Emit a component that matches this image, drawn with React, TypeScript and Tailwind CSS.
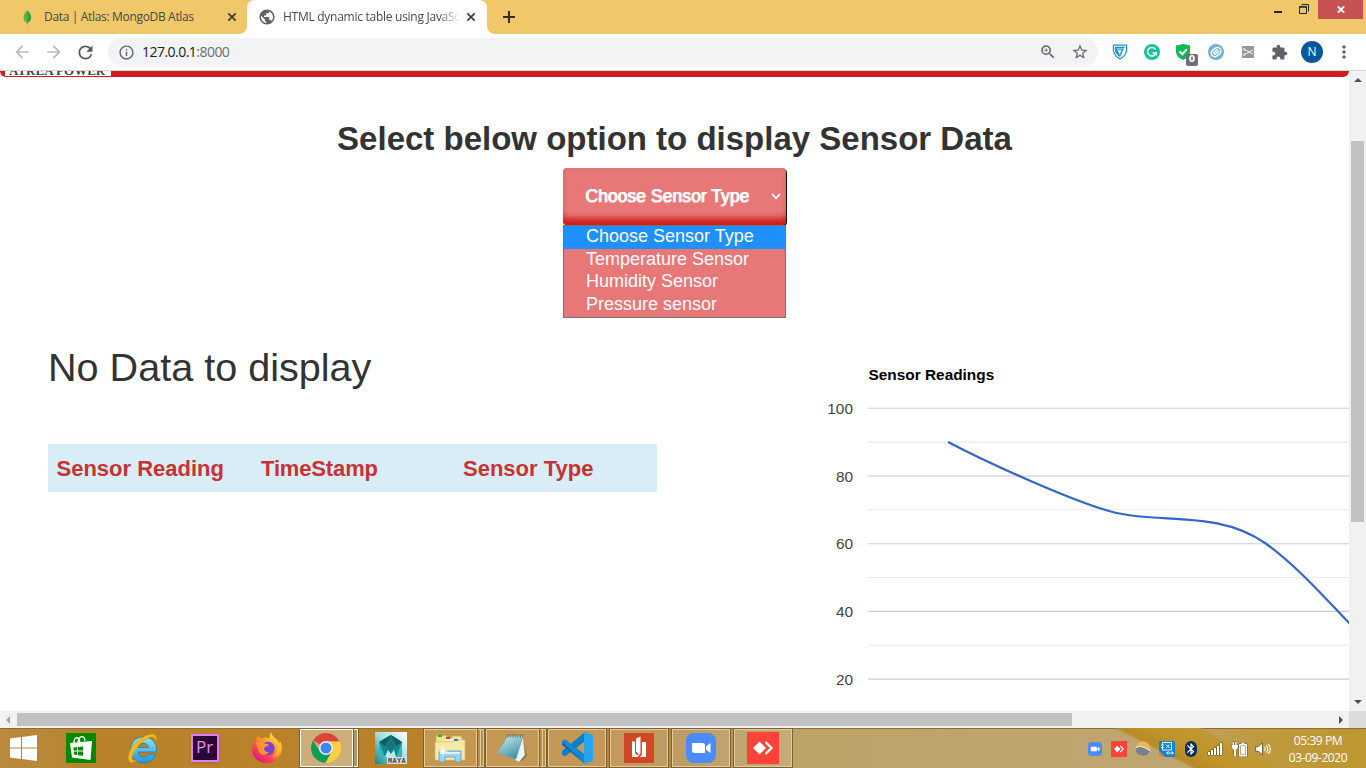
import React from "react";
import {
  MdZoomIn,
  MdStarOutline,
  MdExtension,
  MdPublic,
  MdInfoOutline,
  MdArrowBack,
  MdArrowForward,
  MdRefresh,
  MdMoreVert,
  MdBluetooth,
} from "react-icons/md";

const ui = "font-['Open_Sans','Noto_Sans',sans-serif]";
const arial = "font-['Liberation_Sans',Arial,sans-serif]";

const CloseX = () => (
  <svg className="shrink-0" width="14" height="14" viewBox="0 0 14 14">
    <path d="m3.300 3.300 7.400 7.400M10.700 3.300 3.300 10.700" stroke="#3c3c3c" strokeWidth="1.700" />
  </svg>
);

function TabStrip() {
  return (
    <div className={`flex h-[34px] shrink-0 bg-white ${ui} text-[12px] text-[#45494d]`}>
      <div className="flex w-[247px] items-center rounded-br-lg bg-[#f0c869] pl-[20px]">
        <svg width="14" height="16" viewBox="0 0 14 16">
          <path d="M7.3 1C10 4 11.2 6.2 11.2 8.6c0 2.6-1.6 4.6-3.9 5.6Z" fill="#3f9c35" />
          <path d="M7.3 1C4.8 4 3.5 6.2 3.5 8.6c0 2.6 1.6 4.6 3.8 5.6Z" fill="#5bb14c" />
          <path d="M7.3 3v12.5" stroke="#6c8f4a" strokeWidth=".8" />
        </svg>
        <span className="ml-[10px] w-[181px] whitespace-nowrap tracking-[-0.33px]">Data | Atlas: MongoDB Atlas</span>
        <CloseX />
      </div>
      <div className="w-[240px] bg-linear-to-b from-[#f0c869] from-50% to-white to-50%">
        <div className="flex h-full items-center rounded-t-lg bg-white pl-[11px]">
          <MdPublic size={18} className="text-[#5f6368]" />
          <span className="ml-[7px] w-[177px] overflow-hidden whitespace-nowrap mask-r-from-88% tracking-[-0.270px]">
            HTML dynamic table using JavaScript
          </span>
          <div className="ml-[4px]">
            <CloseX />
          </div>
        </div>
      </div>
      <div className="flex flex-1 items-start rounded-bl-lg bg-[#f0c869] pl-[15px]">
        <svg className="mt-[10px]" width="14" height="14" viewBox="0 0 14 14">
          <path d="M7 1v12M1 7h12" stroke="#2f2f2f" strokeWidth="2" />
        </svg>
        <div className="ml-auto flex items-start">
          <div className="mt-[11px] h-[2px] w-[8px] bg-[#222]" />
          <svg className="mt-[4px] ml-[17px]" width="10" height="10" viewBox="0 0 10 10" fill="none" stroke="#222">
            <path d="M2.5 .5h7v7" />
            <path d="M.5 2.5h7v7h-7z" />
            <path d="M.5 3.2h7" />
          </svg>
          <div className="mr-[3px] ml-[9px] flex h-[19px] w-[45px] items-center justify-center bg-[#c75050]">
            <svg width="8" height="7" viewBox="0 0 8 7">
              <path d="M.8 .3 7.2 6.7M7.2 .3 .8 6.7" stroke="#fff" strokeWidth="1.8" />
            </svg>
          </div>
        </div>
      </div>
    </div>
  );
}

function Toolbar() {
  return (
    <div className={`flex h-[37px] shrink-0 items-center border-b border-[#d4d6d9] bg-white ${ui}`}>
      <MdArrowBack size={20} className="ml-[12px] text-[#b9bbbe]" />
      <MdArrowForward size={20} className="ml-[12px] text-[#b9bbbe]" />
      <MdRefresh size={21} className="ml-[11px] text-[#55595e]" />
      <div className="ml-[12px] flex h-[28px] w-[990px] items-center rounded-full bg-[#f1f3f4]">
        <MdInfoOutline size={17} className="ml-[10px] text-[#5f6368]" />
        <span className="ml-[7px] pb-[2px] text-[14px] tracking-[-0.530px] text-[#202124]">
          127.0.0.1<span className="text-[#6b6f74]">:8000</span>
        </span>
        <MdZoomIn size={18} className="ml-auto text-[#5f6368]" />
        <MdStarOutline size={18} className="mr-[9px] ml-[14px] text-[#5f6368]" />
      </div>
      <svg className="ml-[14px]" width="16" height="16" viewBox="0 0 16 16">
        <path d="M.8 .6h14.400v4.600c0 5-3.500 8.400-7.200 10.400C4.300 13.600.8 10.200.8 5.200Z" fill="#1791d6" />
        <path d="M2 1.800h12v3.600c0 4-2.700 6.900-6 8.800-3.300-1.900-6-4.800-6-8.800Z" fill="#fff" />
        <path d="M2.900 2.700h10.200l-1.300 1.900H4.700L8 11.200l1.500-3 .9.600L8 13C5 11 2.900 8.600 2.900 5.400Z" fill="#1791d6" />
        <path d="M5.500 5.300H12L8.500 10.300 8 9.300l1.700-3H6z" fill="#1791d6" />
      </svg>
      <svg className="ml-[16px]" width="16" height="16" viewBox="0 0 16 16">
        <circle cx="8" cy="8" r="8" fill="#15c39a" />
        <path d="M11.600 5.500A4.300 4.300 0 1 0 12 9H8.500" stroke="#fff" strokeWidth="1.500" fill="none" />
        <path d="M12.300 8v3.500" stroke="#fff" strokeWidth="1.200" />
      </svg>
      <div className="relative ml-[16px] h-[16px] w-[16px]">
        <svg width="14" height="16" viewBox="0 0 14 16">
          <path d="M7 0 14 1.500v6c0 4-3 7-7 8.500-4-1.500-7-4.500-7-8.500v-6Z" fill="#0fb855" />
          <path d="m3.500 7.500 2.700 2.700 4.700-5" stroke="#fff" strokeWidth="2" fill="none" />
        </svg>
        <div className="absolute top-[10px] left-[10px] flex h-[12px] w-[12px] items-center justify-center rounded-[2px] bg-[#6d7079] font-['DejaVu_Sans',sans-serif] text-[9px] font-bold text-white">
          0
        </div>
      </div>
      <svg className="ml-[16px]" width="16" height="16" viewBox="0 0 16 16">
        <circle cx="8" cy="8" r="8" fill="#6db3d2" />
        <g transform="rotate(-38 8 8)" fill="none" stroke="#fff" strokeWidth="1.500">
          <rect x="2.800" y="4.600" width="10.400" height="7" rx="3.500" />
          <path d="M11 7.100H6.500a1 1 0 0 0 0 2.100H11" />
        </g>
      </svg>
      <svg className="ml-[18px]" width="12" height="12" viewBox="0 0 12 12">
        <path d="M0 0h12v12H0z" fill="#979797" />
        <path d="m2.500 3.500 8.500 4.500M2.500 8.500 11 3.800" stroke="#f3f3f3" strokeWidth="1" />
        <circle cx="2.200" cy="3.400" r="1" fill="none" stroke="#f3f3f3" strokeWidth=".8" />
        <circle cx="2.200" cy="8.600" r="1" fill="none" stroke="#f3f3f3" strokeWidth=".8" />
      </svg>
      <MdExtension size={17} className="ml-[17px] text-[#5f6368]" />
      <div className="ml-[13px] flex h-[22px] w-[22px] items-center justify-center rounded-full bg-[#01579b] text-[12px] text-white">
        N
      </div>
      <MdMoreVert size={20} className="ml-[11px] text-[#5f6368]" />
    </div>
  );
}

const options = ["Choose Sensor Type", "Temperature Sensor", "Humidity Sensor", "Pressure sensor"];

function SensorSelect() {
  return (
    <div className="relative h-[57px] w-[223px]">
      <div className="flex h-[57px] items-center rounded-[4px] bg-[#e87878] pl-[22px] text-[17.600px] text-white shadow-[inset_0_-11px_6px_-4px_#cf1d1d,inset_0_0_5px_#dd6a6a,1px_1px_0_#111]">
        <span className="w-[186px] whitespace-nowrap [text-shadow:1px_0_0_#fff,0_1px_0_#fff8]">Choose Sensor Type</span>
        <svg width="10" height="7" viewBox="0 0 10 7">
          <path d="m1 1.200 4 4 4-4" stroke="#fff" strokeWidth="1.800" fill="none" />
        </svg>
      </div>
      <ul className="absolute top-[57px] left-0 z-10 h-[93px] w-[223px] border border-[#7a7070] bg-[#e87878] text-[18px] leading-[21px] text-white">
        {options.map((o, i) => (
          <li key={o} className={i === 0 ? "h-[23px] bg-[#1e90ff] pl-[22px]" : "h-[22.400px] pl-[22px]"}>
            {o}
          </li>
        ))}
      </ul>
    </div>
  );
}

const ticks = [100, 80, 60, 40, 20];

function Chart() {
  return (
    <svg className={`shrink-0 ${arial}`} width="529" height="361" viewBox="820 350 529 361">
      <text x="868.500" y="380" fontSize="15.400" fontWeight="bold" fill="#000">
        Sensor Readings
      </text>
      {ticks.map((t, i) => (
        <g key={t}>
          <path d={`M868 ${408.300 + i * 67.700}H1349`} stroke="#ccc" strokeWidth="1.100" />
          <path d={`M868 ${442.100 + i * 67.700}H1349`} stroke="#ebebeb" strokeWidth="1.100" />
          <text x="853" y={413.800 + i * 67.700} fontSize="15.400" textAnchor="end" fill="#444">
            {t}
          </text>
        </g>
      ))}
      <path
        d="M948 442C988 463 1070 500 1109 511C1158 525 1216 509 1265 543C1297 566 1325 598 1350 624"
        stroke="#3366cc"
        strokeWidth="2.200"
        fill="none"
      />
    </svg>
  );
}

function Page() {
  return (
    <div className={`flex h-[640px] w-[1349px] flex-col overflow-hidden bg-white ${arial} text-[#333]`}>
      <div className="h-[6px] shrink-0 rounded-b-[6px] bg-[#d01c1c] pl-[5px]">
        <div className="flex h-[5px] w-[106px] items-end overflow-hidden bg-white pb-[2px] pl-[4px] font-['Liberation_Serif',serif] text-[13px] leading-[7px] font-bold whitespace-nowrap text-[#444]">
          ATREA POWER
        </div>
      </div>
      <h2 className="mt-[44px] text-center text-[33px] leading-[36px] font-bold">
        Select below option to display Sensor Data
      </h2>
      <div className="mt-[11px] flex justify-center">
        <SensorSelect />
      </div>
      <div className="flex">
        <div className="w-[820px] pl-[48px]">
          <h1 className="mt-[121px] text-[39.600px] leading-[43px]">No Data to display</h1>
          <table className="mt-[55px] w-[609px] table-fixed border-collapse bg-[#d9edf7] text-left text-[22px] text-[#c83232]">
            <thead>
              <tr className="h-[48px]">
                <th className="w-[204px] pl-[8.500px]">Sensor Reading</th>
                <th className="w-[203px] pl-[9px] tracking-[-0.150px]">TimeStamp</th>
                <th className="pl-[8px]">Sensor Type</th>
              </tr>
            </thead>
          </table>
        </div>
        <div className="mt-[125px]">
          <Chart />
        </div>
      </div>
    </div>
  );
}

function VScroll() {
  return (
    <div className="flex w-[17px] flex-col items-center bg-[#f1f1f1]">
      <svg className="mt-[7px]" width="8" height="4" viewBox="0 0 8 4">
        <path d="M4 0l4 4H0z" fill="#505050" />
      </svg>
      <div className="mt-[59px] h-[381px] w-[13px] bg-[#c1c1c1]" />
      <svg className="mt-auto mb-[7px]" width="8" height="4" viewBox="0 0 8 4">
        <path d="M4 4l4-4H0z" fill="#505050" />
      </svg>
    </div>
  );
}

function HScroll() {
  return (
    <div className="flex h-[17px] shrink-0 bg-[#f1f1f1]">
      <div className="flex w-[1349px] items-center">
        <svg className="ml-[6px]" width="4" height="8" viewBox="0 0 4 8">
          <path d="M0 4l4-4v8z" fill="#a3a3a3" />
        </svg>
        <div className="ml-[7px] h-[13px] w-[1055px] bg-[#c1c1c1]" />
        <svg className="mr-[6px] ml-auto" width="4" height="8" viewBox="0 0 4 8">
          <path d="M4 4 0 0v8z" fill="#505050" />
        </svg>
      </div>
      <div className="w-[17px] bg-[#dcdcdc]" />
    </div>
  );
}

const StartIcon = () => (
  <svg width="27" height="26" viewBox="0 0 27 26" fill="#fff">
    <path d="M0 3.500 11 2v10.500H0zM12 1.900 27 0v12.500H12zM0 13.500h11V24L0 22.500zM12 13.500h15V26l-15-1.900z" />
  </svg>
);

const StoreIcon = () => (
  <svg width="30" height="30" viewBox="0 0 30 30">
    <path d="M0 0h30v30H0z" fill="#008a00" />
    <path d="M8 10c0-7 5-7 6 0M12 9c1-7 7-7 7-1" stroke="#fff" strokeWidth="1.300" fill="none" />
    <path d="m4 10 22-2-1.500 19L6 24.500z" fill="#fff" />
    <path d="M7.500 14.500 11 14v3.500H7.600zM12 14l5-.6v4.100h-5zM7.700 18.500H11V22l-3.200-.4zM12 18.500h5v4.200l-5-.5z" fill="#008a00" />
  </svg>
);

const IeIcon = () => (
  <svg width="31" height="31" viewBox="0 0 31 31">
    <defs>
      <linearGradient id="ie" x2="0" y2="1">
        <stop stopColor="#8be4fb" />
        <stop offset="1" stopColor="#1e97da" />
      </linearGradient>
    </defs>
    <path
      d="M16 4C8.500 4 3.500 9.500 3.500 17S9 30 16.500 30c6 0 10.300-3 12.200-8.500h-7.400c-.9 1.700-2.500 2.600-4.600 2.600-3.300 0-5.300-1.900-5.500-5.100h18.300C30.200 9.800 25 4 16 4Zm-4.700 10.500c.5-2.900 2.300-4.500 5.100-4.500s4.600 1.600 4.900 4.500Z"
      fill="url(#ie)"
      stroke="#1578b8"
      strokeWidth=".7"
    />
    <path
      d="M29 8c1-3.200.3-6.200-2.700-6.700C20 .4 10 6.500 5 14.300.8 21 .2 28 3.600 29.200c2 .7 4.600-.6 7-2.500-2 .9-3.900 1.300-4.900.5-2-1.800.2-7.400 4.300-12.800C15 8 21.800 3.700 25.300 4c2.200.2 3.200 1.600 3.700 4Z"
      fill="#f6b916"
      stroke="#d99b12"
      strokeWidth=".4"
    />
  </svg>
);

const PrIcon = () => (
  <div className={`mb-px flex h-[28px] w-[28px] items-center justify-center border-2 border-[#e27aff] bg-[#2a0634] pb-[2px] shadow ${ui} text-[17px] leading-none text-[#e88aff]`}>
    Pr
  </div>
);

const FirefoxIcon = () => (
  <svg width="32" height="32" viewBox="0 0 32 32">
    <defs>
      <linearGradient id="ff" x1=".85" y1=".1" x2=".2" y2=".95">
        <stop stopColor="#ffe33c" />
        <stop offset=".4" stopColor="#ff9a2b" />
        <stop offset=".7" stopColor="#ff4255" />
        <stop offset="1" stopColor="#dc1a80" />
      </linearGradient>
    </defs>
    <path
      d="M20 0c-1.500 3-1.500 5-1 6.500-2.600-1.300-5.700-1.200-7 0C9.500 6.200 8.500 6 7 3.700 5.300 5.500 4.500 7 4.500 9 2.500 11 1 14 1 17.500 1 25.500 8 31 16 31s15-6 15-14.500c0-3.500-1-6-2.700-8 .3 1.500.3 2.500 0 3.500C27 6.500 21 5.500 20 0Z"
      fill="url(#ff)"
    />
    <circle cx="17" cy="16.500" r="6.700" fill="#7a43d5" />
    <path d="M5 11c3-2.500 7-1.500 8.500.5 2 .2 4 .3 4 1.200 0 1.500-3 2-4.500 3.300 0 3 2.500 5 5 3.500-2.500 5.500-10 4-11-2.500Z" fill="#ff9630" />
    <path d="M20 7c5 2.500 7 7 6 12-1 4-3.500 5.500-5.500 6.500 7.500-.5 11-7.500 8-14Z" fill="#ffc02e" opacity=".8" />
  </svg>
);

const ChromeIcon = () => (
  <svg width="30" height="30" viewBox="0 0 30 30">
    <path d="M15 15 2.010 7.500A15 15 0 0 1 27.990 7.500L28 8.500H15z" fill="#db4437" />
    <path d="M2.010 7.500A15 15 0 0 0 14.500 30l6.200-11.500L9 18.500Z" fill="#0f9d58" />
    <path d="M28.500 8.500A15 15 0 0 1 14.500 30l6.500-11.500L18 8.500Z" fill="#ffcd40" />
    <circle cx="15" cy="15" r="7" fill="#f1f1f1" />
    <circle cx="15" cy="15" r="5.500" fill="#4285f4" />
  </svg>
);

const MayaIcon = () => (
  <svg width="32" height="32" viewBox="0 0 32 32">
    <defs>
      <linearGradient id="my" x1="1" x2="0" y2="1">
        <stop stopColor="#fff" />
        <stop offset=".5" stopColor="#9edbdc" />
        <stop offset="1" stopColor="#12898d" />
      </linearGradient>
    </defs>
    <path d="M0 0h32v32H0z" fill="url(#my)" />
    <path d="M4 10 16 3l11 7v15H4z" fill="#10898f" />
    <path d="m4 10 6 4 6-11zM16 3l5 11 6-4z" fill="#0b5d66" />
    <path d="m10 14 6-11 5 11-5 5z" fill="#17767d" />
    <path d="M4 10 10 25H4zM27 10l-6 15h6z" fill="#35b3b5" />
    <path d="m10 25 3-7 3 4 3-4 2 7z" fill="#bfe8e8" />
    <path d="M12 25h20v7H12z" fill="#d8dcdc" />
    <text x="13" y="31" fontSize="6.800" fontWeight="bold" textLength="17.500" className="font-['Liberation_Mono',monospace]" fill="#444">
      MAYA
    </text>
  </svg>
);

const FolderIcon = () => (
  <svg width="32" height="30" viewBox="0 0 32 30">
    <path d="M2 5V2.500h10L14 5h4V3h9l2 4v20H2z" fill="#f5e293" stroke="#cfaf55" strokeWidth=".7" />
    <path d="M4 2h4v2H4z" fill="#10b82a" />
    <path d="M11 6h13l2 2H11z" fill="#fdf8dd" />
    <path d="M12 4h4v2h-4z" fill="#d33b25" />
    <path d="M1 9h17l2-2h11v20H1z" fill="#f9e9a6" stroke="#d5b65e" strokeWidth=".6" />
    <path d="M20 6h4v2h-4z" fill="#2580dd" />
    <path d="M5 29V18h22v11h-6v-5H11v5z" fill="#9bd3ee" stroke="#5ea5cf" strokeWidth=".9" />
    <path d="M6 19h20v2H6z" fill="#d9f2fd" />
    <path d="m9 12 .8 5 5 1-5 1L9 24l-.8-5-5-1 5-1z" fill="#fff" />
  </svg>
);

const NotepadIcon = () => (
  <svg width="32" height="31" viewBox="0 0 32 31">
    <defs>
      <linearGradient id="np" x2=".6" y2="1">
        <stop stopColor="#d3eef2" />
        <stop offset="1" stopColor="#3f93a5" />
      </linearGradient>
    </defs>
    <path d="m27 4 4 19-5 5-6-2z" fill="#8f6420" opacity=".7" />
    <path d="m27 3 2 19-6 7-4-2z" fill="#eef6f7" stroke="#8fa9ae" strokeWidth=".6" />
    <path d="M12 3h15l-7 23L1 20z" fill="url(#np)" stroke="#7ba6ae" strokeWidth=".6" />
    <path d="M12 1v3.500M14.500 1v3.500M17 1v3.500M19.500 1v3.500M22 1v3.500M24.500 1v3.500M27 1v3.500" stroke="#68777a" strokeWidth="1" />
  </svg>
);

const CodeIcon = () => (
  <svg width="32" height="32" viewBox="0 0 32 32">
    <path d="M24 0v9L4 24.500l-3-2V19z" fill="#0a7fcb" />
    <path d="M24 32v-9L4 7.500l-3 2V13z" fill="#0a68ad" />
    <path d="m1 9.500 3-2 20 15.500V32z" fill="#1288d6" />
    <path d="M24 0l8 3v26l-8 3-1-1V1z" fill="#25a5ee" />
  </svg>
);

const BookIcon = () => (
  <svg width="30" height="30" viewBox="0 0 30 30">
    <path d="M0 0h30v30H0z" fill="#d24726" />
    <path d="M8 8.500h3v11.500l3 3.500-.5.500H8z" fill="#fff" />
    <path d="M18 9h4v15h-6.500c2-1 2.500-2.500 2.500-5z" fill="#fff" />
    <path d="M12 5.500 16.500 3.500v15.500c0 1.500-.5 2.500-1.500 3l-3-3.500z" fill="#fff" />
    <path d="M15 22.500c-1.500.5-3 0-3.500-1" stroke="#fff" fill="none" />
  </svg>
);

const ZoomIcon = ({ size = 30 }: { size?: number }) => (
  <svg width={size} height={size} viewBox="0 0 30 30">
    <rect width="30" height="30" rx="8" fill="#4a8cff" />
    <path d="M6 10h10.500a2.500 2.500 0 0 1 2.500 2.500V20H8.500A2.500 2.500 0 0 1 6 17.500zM20 13.500l4.500-3.500v10L20 16.700z" fill="#fff" />
  </svg>
);

const AnyDeskIcon = ({ size = 32 }: { size?: number }) => (
  <svg width={size} height={size} viewBox="0 0 32 32">
    <path d="M0 0h32v32H0z" fill="#ff4338" />
    <path d="m12.500 9.500 6.500 6.500-6.500 6.500L6 16z" fill="#fff" />
    <path d="m17.500 10 6 6-6 6" stroke="#fff" strokeWidth="2.300" fill="none" transform="translate(1)" />
  </svg>
);

type Item = { icon: React.ReactNode; kind: "plain" | "open" | "stack" | "active" };

const items: Item[] = [
  { icon: <StoreIcon />, kind: "plain" },
  { icon: <IeIcon />, kind: "plain" },
  { icon: <PrIcon />, kind: "plain" },
  { icon: <FirefoxIcon />, kind: "plain" },
  { icon: <ChromeIcon />, kind: "active" },
  { icon: <MayaIcon />, kind: "plain" },
  { icon: <FolderIcon />, kind: "stack" },
  { icon: <NotepadIcon />, kind: "stack" },
  { icon: <CodeIcon />, kind: "open" },
  { icon: <BookIcon />, kind: "open" },
  { icon: <ZoomIcon />, kind: "open" },
  { icon: <AnyDeskIcon />, kind: "open" },
];

const edge = "border border-[#e2cb9f] outline outline-[#80602c]";

function TaskItem({ icon, kind }: Item) {
  if (kind === "plain")
    return <div className="flex h-[40px] w-[62px] items-center justify-center pr-px">{icon}</div>;
  if (kind === "open")
    return (
      <div className="flex h-[40px] w-[62px] items-center pl-[2px]">
        <div className={`flex h-[38px] w-[58px] items-center justify-center bg-[#d7c39c]/35 ${edge}`}>{icon}</div>
      </div>
    );
  return (
    <div className="flex h-[40px] w-[62px] items-center pl-[2px]">
      <div
        className={`flex h-[38px] w-[53px] items-center justify-center ${
          kind === "active" ? "border border-white bg-[#dccdae]/60 pr-px outline outline-[#80602c]" : `bg-[#d7c39c]/35 pr-px ${edge}`
        }`}
      >
        {icon}
      </div>
      <div
        className={
          kind === "active"
            ? "ml-px h-[38px] w-[4px] border-y border-r border-white bg-[#b99459] outline outline-[#80602c]"
            : "ml-px flex h-[38px] w-[6px] border-y border-r border-[#e2cb9f] bg-[#b98f4c] outline outline-[#80602c]"
        }
      >
        {kind === "stack" && <div className="h-full w-[3px] border-r border-[#e2cb9f]" />}
      </div>
    </div>
  );
}

function Taskbar() {
  return (
    <div className="flex h-[40px] shrink-0 items-center bg-[linear-gradient(90deg,#b98a3e_0,#b78734_60px,#b9822a_75px,#ba812a_450px,#b98236_600px,#b08a4c_690px,#bda36a_800px,#bfa670_1180px,#bf9a3f_1250px,#bd9730_1366px)] shadow-[inset_0_1px_0_#8f6c30]">
      <div className="flex w-[50px] justify-center pr-[3px]">
        <StartIcon />
      </div>
      {items.map((it, i) => (
        <TaskItem key={i} {...it} />
      ))}
      <div className="flex h-full flex-1 items-center bg-[linear-gradient(27deg,transparent_61%,#b68c28_62%,#bf9328_67%,#c09936_74%,transparent_75%)] pt-px pl-[294px]">
        <ZoomIcon size={14} />
        <div className="ml-[9px]">
          <AnyDeskIcon size={16} />
        </div>
        <svg className="ml-[8px]" width="16" height="16" viewBox="0 0 16 16">
          <circle cx="8" cy="8" r="7.500" fill="#f1b553" />
          <path d="M.5 8C3 4.500 7 4.800 15 10a7.500 7.500 0 0 1-14.500-2Z" fill="#77828d" />
          <path d="M.7 7.500C3.500 4 7.500 5 15.300 9.700" stroke="#e9eef2" strokeWidth="1" fill="none" />
        </svg>
        <svg className="ml-[8px]" width="16" height="16" viewBox="0 0 16 16">
          <rect width="16" height="16" rx="1.500" fill="#0c86d0" />
          <path d="M3.500 1.500h9v7.500h-9zM2 4h3M2 6.500h3M7 3.500l3.500 3.500M10.500 3.500 7 7M7.500 12h7M9.500 10.300 7.800 12l1.700 1.700M12.500 10.300l1.700 1.700-1.700 1.700" stroke="#fff" fill="none" strokeWidth=".9" />
          <path d="m0 10 6 6H0z" fill="#e78332" />
        </svg>
        <div className="ml-[10px] flex h-[16px] w-[12px] items-center justify-center rounded-full bg-[#0b2d63] text-white">
          <MdBluetooth size={14} className="shrink-0" />
        </div>
        <svg className="ml-[10px]" width="16" height="14" viewBox="0 0 16 14">
          <path d="M1 10h2v3H1zM4 8h2v5H4zM7 6h2v7H7zM10 4h2v9h-2zM13 1h2v12h-2z" fill="#fff" stroke="#4f3a16" strokeWidth=".8" paintOrder="stroke" />
        </svg>
        <svg className="ml-[8px]" width="17" height="16" viewBox="0 0 17 16" stroke="#4f3a16" strokeWidth=".8" fill="#fff" paintOrder="stroke">
          <path d="M1.500 1H3v3h1.200V1h1.500v3H7v3L4.900 9v6.500H3V9L.8 7V4h.7z" />
          <path d="M8 3h2.500V1.500h3V3H16v12.500H8z" />
          <path d="M9.800 5h4.400v8.500H9.800z" fill="#fff" />
        </svg>
        <svg className="ml-[7px]" width="16" height="14" viewBox="0 0 16 14">
          <path d="M.7 4.500h3L7.500 1v12L3.700 9.500h-3z" fill="#fff" stroke="#4f3a16" strokeWidth=".7" />
          <path d="M9.300 5q1.500 2 0 4M11.300 3.300q3 3.700 0 7.400M13.300 2q4 5 0 10" fill="none" stroke="#fff" strokeWidth="1.100" />
        </svg>
        <div className={`ml-[17px] w-[60px] text-center whitespace-nowrap ${ui} text-[12px] leading-[17px] tracking-[-0.420px] text-white`}>
          <div>05:39 PM</div>
          <div>03-09-2020</div>
        </div>
      </div>
    </div>
  );
}

export default function App() {
  return (
    <div className="flex h-[768px] w-[1366px] flex-col overflow-hidden bg-white">
      <TabStrip />
      <Toolbar />
      <div className="flex h-[640px] shrink-0">
        <Page />
        <VScroll />
      </div>
      <HScroll />
      <Taskbar />
    </div>
  );
}
